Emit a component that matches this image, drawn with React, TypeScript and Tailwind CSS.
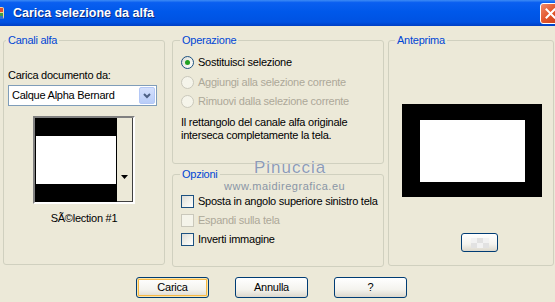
import React from "react";

const Radio = ({ checked, disabled }: { checked?: boolean; disabled?: boolean }) => (
  <span
    className={
      "w-[13px] h-[13px] rounded-full border flex items-center justify-center shrink-0 " +
      (disabled
        ? "border-[#cac8bb] bg-[#f5f4ea]"
        : "border-[#1c5180] bg-[linear-gradient(135deg,#dcdcd7_0%,#f0f0ea_50%,#ffffff_100%)]")
    }
  >
    {checked && <span className="w-[5px] h-[5px] rounded-full bg-[#21a121]" />}
  </span>
);

const Check = ({ disabled }: { disabled?: boolean }) => (
  <span
    className={
      "w-[13px] h-[13px] border shrink-0 " +
      (disabled
        ? "border-[#cac8bb] bg-[#f5f4ea]"
        : "border-[#1c5180] bg-[linear-gradient(135deg,#dcdcd7_0%,#f0f0ea_50%,#ffffff_100%)]")
    }
  />
);

const Btn = ({ label, def }: { label: string; def?: boolean }) => (
  <div
    className={
      "w-[73px] h-[21px] rounded-[3px] border border-[#003c74] bg-[linear-gradient(to_bottom,#ffffff_0%,#f4f3ee_60%,#dcd8cc_100%)] flex items-center justify-center " +
      (def ? "shadow-[inset_0_0_0_1px_#fde6a8,inset_0_0_0_2px_#f5b846]" : "")
    }
  >
    {label}
  </div>
);

export default function App() {
  return (
    <div className="w-[555px] h-[302px] overflow-hidden bg-[#ece9d8] flex flex-col font-['Liberation_Sans',Arial,sans-serif] text-[11px] tracking-[-0.25px] text-black relative">
      {/* Title bar */}
      <div className="h-[26px] shrink-0 flex items-center bg-[linear-gradient(to_bottom,#3d8bf5_0%,#0a5ff0_10%,#0058ea_45%,#0052e2_85%,#003fc4_100%)]">
        <svg width="16" height="16" viewBox="0 0 16 16" className="-ml-[10px] shrink-0">
          <rect x="2" y="2" width="12" height="12" rx="2" fill="#f0d8a0" />
          <rect x="9" y="3" width="4" height="4" fill="#e05030" />
          <rect x="9" y="8" width="4" height="3" fill="#40a040" />
          <rect x="9" y="11" width="4" height="3" fill="#3070d0" />
          <rect x="5" y="5" width="3" height="6" fill="#b07020" />
        </svg>
        <span className="ml-[7px] text-white font-bold text-[12.5px] tracking-[0px] [text-shadow:1px_1px_0_#0a2a80]">
          Carica selezione da alfa
        </span>
        <div className="flex-1" />
        <div className="w-[21px] h-[21px] -mr-[6px] rounded-[3px] border border-white bg-[linear-gradient(135deg,#f08a6a_0%,#e2552b_50%,#c8401c_100%)] flex items-center justify-center">
          <svg width="11" height="11" viewBox="0 0 11 11">
            <path d="M1.5 1.5 L9.5 9.5 M9.5 1.5 L1.5 9.5" stroke="white" strokeWidth="2" strokeLinecap="square" />
          </svg>
        </div>
      </div>

      {/* Groups */}
      <div className="flex pt-[8px] pl-[3px] h-[241px] shrink-0">
        {/* Canali alfa */}
        <fieldset className="w-[162px] h-[231px] border border-[#d0d0bf] rounded-[3px] shrink-0">
          <legend className="ml-[2px] px-[2px] text-[#0046d5] leading-[13px]">Canali alfa</legend>
          <div className="flex flex-col px-[4px]">
            <div className="mt-[22px] leading-[13px]">Carica documento da:</div>
            <div className="mt-[3px] w-[149px] h-[21px] border border-[#7f9db9] bg-white flex items-center">
              <span className="ml-[3px] flex-1">Calque Alpha Bernard</span>
              <div className="w-[16px] h-[17px] mr-[1px] rounded-[2px] bg-[linear-gradient(to_bottom,#d4e0fc_0%,#b9cdf8_100%)] border border-[#b4c8f6] flex items-center justify-center">
                <svg width="8" height="6" viewBox="0 0 8 6">
                  <path d="M1 1 L4 4 L7 1" stroke="#4d6185" strokeWidth="2" fill="none" />
                </svg>
              </div>
            </div>
            <div className="mt-[10px] self-center w-[102px] h-[88px] border-2 border-t-[#808080] border-l-[#808080] border-b-white border-r-white flex">
              <div className="w-[82px] flex flex-col border border-black">
                <div className="h-[17px] bg-black" />
                <div className="flex-1 bg-white" />
                <div className="h-[17px] bg-black" />
              </div>
              <div className="flex-1 bg-[#ece9d8] border-r border-b border-[#404040] flex items-end justify-center pb-[22px]">
                <svg width="7" height="4" viewBox="0 0 7 4">
                  <path d="M0 0 L7 0 L3.5 4 Z" fill="black" />
                </svg>
              </div>
            </div>
            <div className="mt-[8px] text-center leading-[13px]">SÃ©lection #1</div>
          </div>
        </fieldset>

        {/* Middle column */}
        <div className="ml-[7px] w-[212px] flex flex-col shrink-0">
          <fieldset className="h-[130px] border border-[#d0d0bf] rounded-[3px]">
            <legend className="ml-[7px] px-[2px] text-[#0046d5] leading-[13px]">Operazione</legend>
            <div className="flex flex-col pl-[8px] pt-[6px]">
              <div className="h-[19px] flex items-center gap-[4px]">
                <Radio checked />
                <span>Sostituisci selezione</span>
              </div>
              <div className="h-[20px] flex items-center gap-[4px] text-[#aca899]">
                <Radio disabled />
                <span>Aggiungi alla selezione corrente</span>
              </div>
              <div className="h-[19px] flex items-center gap-[4px] text-[#aca899]">
                <Radio disabled />
                <span>Rimuovi dalla selezione corrente</span>
              </div>
              <div className="mt-[5px] leading-[13px]">
                Il rettangolo del canale alfa originale
                <br />
                interseca completamente la tela.
              </div>
            </div>
          </fieldset>
          <fieldset className="mt-[4px] h-[99px] border border-[#d0d0bf] rounded-[3px]">
            <legend className="ml-[7px] px-[2px] text-[#0046d5] leading-[13px]">Opzioni</legend>
            <div className="flex flex-col pl-[8px] pt-[11px]">
              <div className="h-[19px] flex items-center gap-[4px]">
                <Check />
                <span>Sposta in angolo superiore sinistro tela</span>
              </div>
              <div className="h-[19px] flex items-center gap-[4px] text-[#aca899]">
                <Check disabled />
                <span>Espandi sulla tela</span>
              </div>
              <div className="h-[19px] flex items-center gap-[4px]">
                <Check />
                <span>Inverti immagine</span>
              </div>
            </div>
          </fieldset>
        </div>

        {/* Anteprima */}
        <fieldset className="ml-[4px] w-[166px] h-[232px] border border-[#d0d0bf] rounded-[3px] shrink-0">
          <legend className="ml-[6px] px-[2px] text-[#0046d5] leading-[13px]">Anteprima</legend>
          <div className="flex flex-col">
            <div className="mt-[57px] ml-[13px] w-[140px] h-[93px] bg-black pt-[16px] pl-[18px]">
              <div className="w-[105px] h-[62px] bg-white" />
            </div>
            <div className="mt-[36px] ml-[72px] w-[37px] h-[19px] rounded-[3px] border border-[#003c74] bg-[linear-gradient(to_bottom,#ffffff_0%,#f4f3ee_60%,#dcd8cc_100%)] flex items-center justify-center">
              <svg width="18" height="10" viewBox="0 0 18 10">
                <rect x="0" y="0" width="6" height="5" fill="#f2f2f2" />
                <rect x="6" y="0" width="6" height="5" fill="#e2e2e2" />
                <rect x="12" y="0" width="6" height="5" fill="#f2f2f2" />
                <rect x="0" y="5" width="6" height="5" fill="#e2e2e2" />
                <rect x="6" y="5" width="6" height="5" fill="#f2f2f2" />
                <rect x="12" y="5" width="6" height="5" fill="#e2e2e2" />
              </svg>
            </div>
          </div>
        </fieldset>
      </div>

      {/* Buttons */}
      <div className="mt-[10px] flex pl-[136px] gap-[26px]">
        <Btn label="Carica" def />
        <Btn label="Annulla" />
        <Btn label="?" />
      </div>

      {/* Watermark */}
      <div className="absolute left-[254px] top-[158px] text-[17px] tracking-[1px] text-[#8d9bb5] [text-shadow:0_0_1px_#ffffff] leading-[20px]">
        Pinuccia
      </div>
      <div className="absolute left-[224px] top-[180px] text-[11px] tracking-[0.5px] text-[#8a96a6] leading-[13px]">
        www.maidiregrafica.eu
      </div>
    </div>
  );
}
